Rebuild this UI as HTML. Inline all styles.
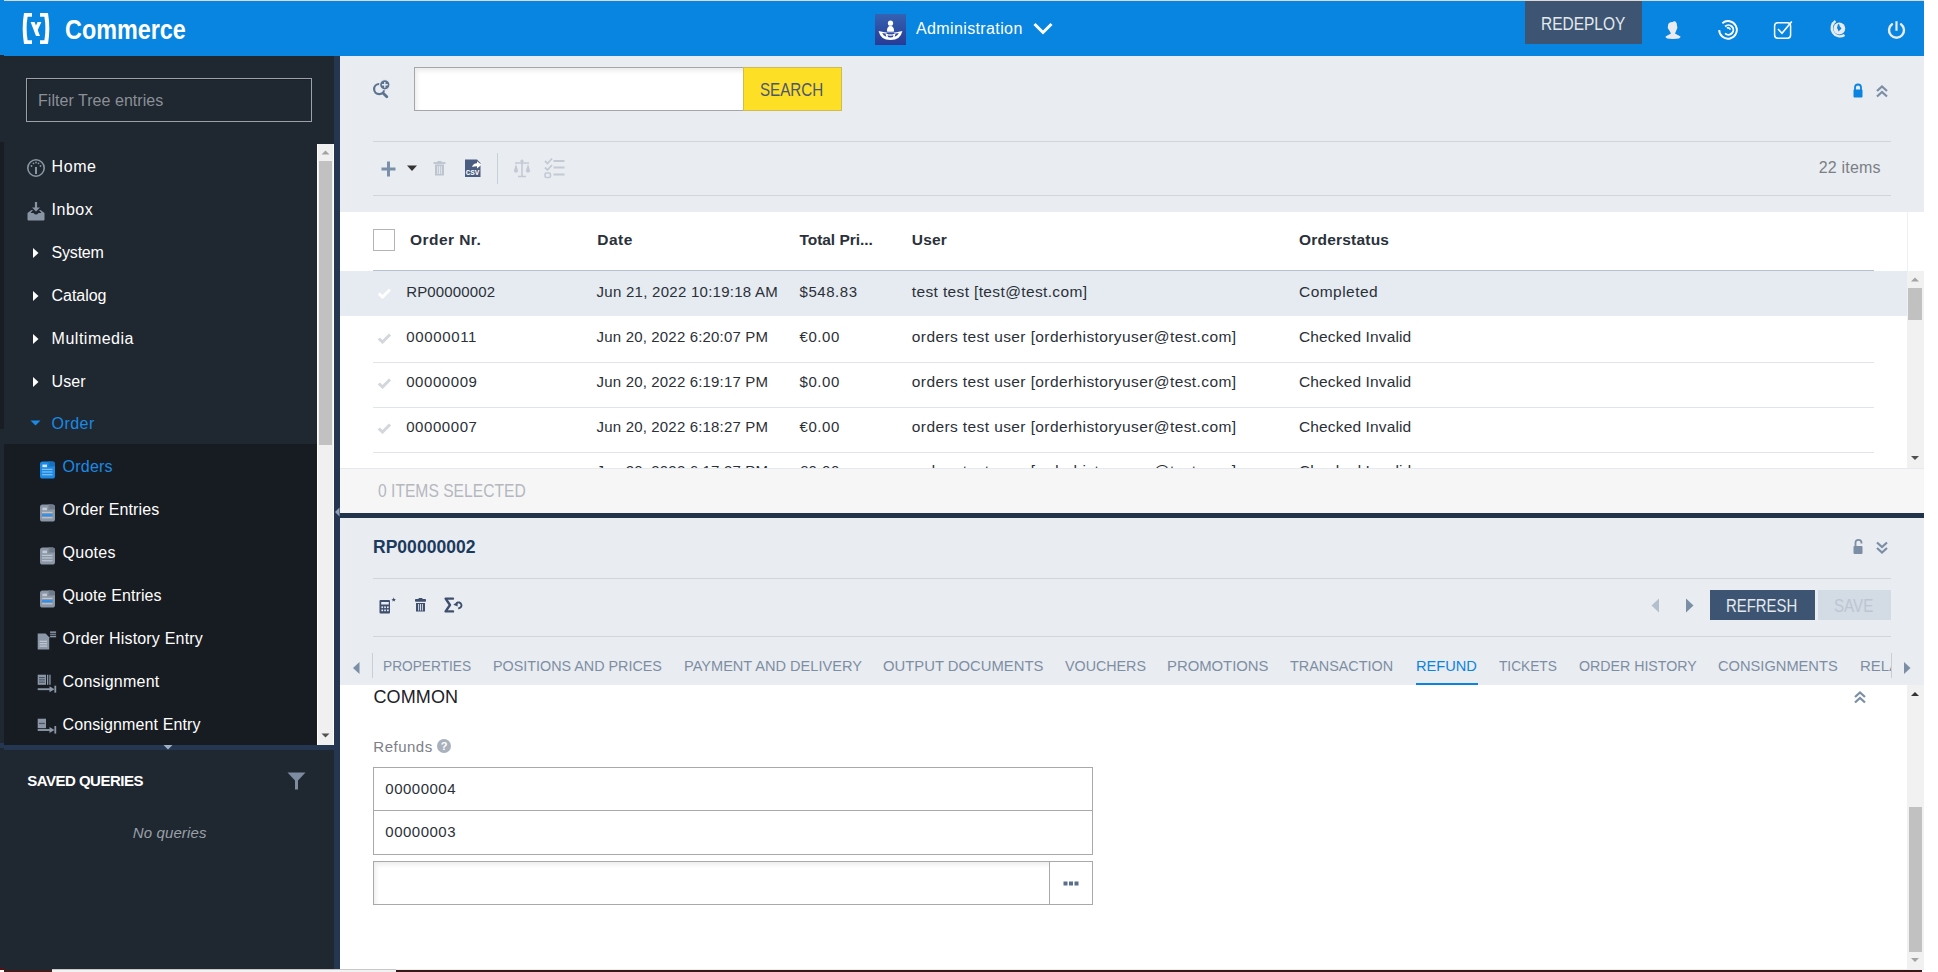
<!DOCTYPE html>
<html><head><meta charset="utf-8"><title>Backoffice</title>
<style>
html,body{margin:0;padding:0;}
body{width:1938px;height:972px;overflow:hidden;position:relative;background:#ffffff;font-family:"Liberation Sans", sans-serif;}
svg{display:block;}
</style></head><body>
<div style="position:absolute;left:0px;top:0px;width:1938px;height:972px;background:#ffffff;"></div>
<div style="position:absolute;left:4px;top:0px;width:1920px;height:1px;background:#dcd9d6;"></div>
<div style="position:absolute;left:0px;top:0px;width:4px;height:55px;background:#0785e0;"></div>
<div style="position:absolute;left:4px;top:1px;width:1920px;height:55px;background:#0785e0;"></div>
<div style="position:absolute;left:0px;top:56px;width:334px;height:914px;background:#1f2730;"></div>
<div style="position:absolute;left:0px;top:55px;width:4px;height:1px;background:#1f2730;"></div>
<div style="position:absolute;left:0px;top:142px;width:4px;height:287px;background:#181d24;"></div>
<div style="position:absolute;left:334px;top:56px;width:6px;height:914px;background:#243650;"></div>
<div style="position:absolute;left:340px;top:56px;width:1584px;height:914px;background:#e9ecf1;"></div>
<div style="position:absolute;left:4px;top:970px;width:48px;height:2px;background:#421a1a;"></div>
<div style="position:absolute;left:0px;top:968px;width:4px;height:2px;background:#5a1010;"></div>
<div style="position:absolute;left:52px;top:969px;width:344px;height:3px;background:#f2f2f2;"></div>
<div style="position:absolute;left:52px;top:969px;width:344px;height:1px;background:#c8c8c8;"></div>
<div style="position:absolute;left:396px;top:970px;width:1526px;height:2px;background:#3a1616;"></div>
<svg style="position:absolute;left:20px;top:11px;" width="34" height="36" viewBox="0 0 34 36">
<path d="M12 2 H4 Q1.4 17.5 4 33 H12 V29.2 H7.6 Q5.6 17.5 7.6 5.8 H12 Z" fill="#fff"/>
<path d="M20 2 H28 Q30.6 17.5 28 33 H20 V29.2 H24.4 Q26.4 17.5 24.4 5.8 H20 Z" fill="#fff"/>
<path d="M10.6 11 L14.6 11 L20 25 L16 25 Z" fill="#fff"/>
<path d="M17.6 11 L21.4 11 L17.4 19.8 L15.5 15.6 Z" fill="#fff"/>
</svg>
<div id="t0" style="position:absolute;left:65px;top:15.72px;font-size:27.5px;line-height:27.5px;color:#ffffff;font-weight:700;white-space:nowrap;transform:scaleX(0.8503);transform-origin:0 0;">Commerce</div>
<svg style="position:absolute;left:875px;top:14px;" width="31" height="31" viewBox="0 0 31 31">
<defs><linearGradient id="ag" x1="0" y1="0" x2="0" y2="1"><stop offset="0" stop-color="#3562b2"/><stop offset="1" stop-color="#283a95"/></linearGradient></defs>
<rect x="0" y="0" width="31" height="31" fill="url(#ag)"/>
<path d="M3.6 16.9 Q15.5 20.4 27.4 16.9 Q25.5 26 15.5 26 Q5.5 26 3.6 16.9 Z" fill="#fff"/>
<path d="M7.2 19 Q15.5 21.3 23.8 19 Q21.8 23.4 15.5 23.4 Q9.2 23.4 7.2 19 Z" fill="#2d479f"/>
<path d="M11.3 19.8 L12.4 23.6 M19.7 19.8 L18.6 23.6" stroke="#fff" stroke-width="1.6"/>
<path d="M11.5 20.4 Q15.5 21.6 19.5 20.4" fill="none" stroke="#fff" stroke-width="1.3"/>
<circle cx="15.5" cy="9.2" r="2.6" fill="#fff"/>
<path d="M11.6 19.2 Q15.5 20.2 19.4 19.2" fill="none" stroke="#2f4aa5" stroke-width="1.3"/>
<path d="M11.9 17.4 Q11.9 11.9 15.5 11.9 Q19.1 11.9 19.1 17.4 Q15.5 18.3 11.9 17.4 Z" fill="#fff"/>
</svg>
<div id="t1" style="position:absolute;left:916px;top:21.46px;font-size:16px;line-height:16px;color:#ffffff;font-weight:400;white-space:nowrap;letter-spacing:0.377px;">Administration</div>
<svg style="position:absolute;left:1032px;top:21px;" width="22" height="15" viewBox="0 0 22 15"><path d="M2.5 3 L11 11.5 L19.5 3" fill="none" stroke="#fff" stroke-width="3"/></svg>
<div style="position:absolute;left:1525px;top:1px;width:117px;height:43px;background:#3d5573;"></div>
<div id="t2" style="position:absolute;left:1541.1px;top:16.19px;font-size:17.5px;line-height:17.5px;color:#e4e9ee;font-weight:400;white-space:nowrap;transform:scaleX(0.8838);transform-origin:0 0;">REDEPLOY</div>
<svg style="position:absolute;left:1663px;top:20px;" width="20" height="20" viewBox="0 0 20 20">
<path d="M5 5.5 Q5 2 9.5 2 Q11 1 12.5 1.5 Q14 3 14 5.5 Q15 8 13.5 10 Q12.5 12.5 12 13.5 L17.5 16.5 Q18 19 10 19 Q2 19 2.5 16.5 L8 13.5 Q7.5 12.5 6 10 Q4 8 5 5.5 Z" fill="#e9ebef"/>
</svg>
<svg style="position:absolute;left:1717px;top:19px;" width="22" height="22" viewBox="0 0 22 22">
<path d="M2.2 10.9 A8.8 8.8 0 1 0 5.34 4.16" fill="none" stroke="#fff" stroke-width="1.9"/>
<path d="M8.1 7.5 A4.8 4.8 0 1 1 8.1 14.3" fill="none" stroke="#fff" stroke-width="1.9"/>
<path d="M9.9 9.1 A2.2 2.2 0 0 1 13.2 10.6" fill="none" stroke="#fff" stroke-width="1.8"/>
</svg>
<svg style="position:absolute;left:1772px;top:19px;" width="22" height="22" viewBox="0 0 22 22">
<rect x="2.6" y="3.8" width="16" height="15.5" rx="3.2" fill="none" stroke="#fff" stroke-width="1.5"/>
<path d="M6 10 L10 14.3 L19.8 2.5" fill="none" stroke="#fff" stroke-width="1.6"/>
</svg>
<svg style="position:absolute;left:1827px;top:18px;" width="22" height="22" viewBox="0 0 22 22">
<path d="M8.5 3 A8 8 0 0 0 17.5 17" fill="none" stroke="#e9ebef" stroke-width="2.4"/>
<circle cx="12.3" cy="10.5" r="5.9" fill="#e9ebef"/>
<path d="M11 6 Q13 6 12.5 8 L14.5 10.5 L11.5 13.5 Q11 11 10 10 Z" fill="#0785e0"/>
</svg>
<svg style="position:absolute;left:1886px;top:19px;" width="22" height="22" viewBox="0 0 22 22">
<path d="M6 5.2 A7.5 7.5 0 1 0 15 5.2" fill="none" stroke="#e9ebef" stroke-width="2.4" stroke-linecap="round"/>
<path d="M10.5 2.2 V11.8" fill="none" stroke="#e9ebef" stroke-width="2.2"/>
</svg>
<div style="position:absolute;left:26px;top:78px;width:286px;height:44px;background:transparent;box-sizing:border-box;border:1px solid #9ca1a7;background:#1f2730;box-shadow:inset 1px 1px 1px rgba(0,0,0,0.25);"></div>
<div id="t3" style="position:absolute;left:38px;top:93.46px;font-size:16px;line-height:16px;color:#8b9097;font-weight:400;white-space:nowrap;letter-spacing:0.044px;">Filter Tree entries</div>
<div style="position:absolute;left:317px;top:144px;width:17px;height:601px;background:#f0f0f0;box-sizing:border-box;border-left:1px solid #ffffff;border-right:1px solid #ffffff;"></div>
<div style="position:absolute;left:319px;top:161px;width:13px;height:284px;background:#c1c1c1;"></div>
<svg style="position:absolute;left:319px;top:148px;" width="13" height="8" viewBox="0 0 13 8"><path d="M2.5 6.5 L6.5 2.5 L10.5 6.5 Z" fill="#a3a3a3"/></svg>
<svg style="position:absolute;left:319px;top:732px;" width="13" height="8" viewBox="0 0 13 8"><path d="M2.5 1.5 L6.5 5.5 L10.5 1.5 Z" fill="#505050"/></svg>
<div style="position:absolute;left:4px;top:444px;width:313px;height:301px;background:#171c22;"></div>
<div style="position:absolute;left:4px;top:745px;width:330px;height:5px;background:#243650;"></div>
<div style="position:absolute;left:0px;top:743px;width:4px;height:5px;background:#243650;"></div>
<svg style="position:absolute;left:163px;top:745px;" width="10" height="5" viewBox="0 0 10 5"><path d="M0.5 0 L9.5 0 L5 4.5 Z" fill="#9fb0c6"/></svg>
<div id="t4" style="position:absolute;left:51.6px;top:158.96px;font-size:16px;line-height:16px;color:#ffffff;font-weight:400;white-space:nowrap;letter-spacing:0.564px;">Home</div>
<svg style="position:absolute;left:26px;top:158.0px;" width="20" height="20" viewBox="0 0 20 20"><circle cx="10" cy="10" r="8.2" fill="none" stroke="#8a95a3" stroke-width="1.6"/>
<path d="M10 9 L10 16" stroke="#8a95a3" stroke-width="2"/>
<circle cx="5.5" cy="8" r="0.9" fill="#8a95a3"/><circle cx="7.5" cy="5.3" r="0.9" fill="#8a95a3"/><circle cx="10" cy="4.5" r="0.9" fill="#8a95a3"/><circle cx="12.5" cy="5.3" r="0.9" fill="#8a95a3"/><circle cx="14.5" cy="8" r="0.9" fill="#8a95a3"/></svg>
<div id="t5" style="position:absolute;left:51.6px;top:201.96px;font-size:16px;line-height:16px;color:#ffffff;font-weight:400;white-space:nowrap;letter-spacing:0.485px;">Inbox</div>
<svg style="position:absolute;left:26px;top:201.0px;" width="20" height="21" viewBox="0 0 20 21"><path d="M10 1 V9" stroke="#8a95a3" stroke-width="2.2"/><path d="M6 6.5 L10 10.5 L14 6.5 Z" fill="#8a95a3"/>
<path d="M1.5 12 L5.5 9 L7 9 L4.5 12 H7.5 Q10 15 12.5 12 H15.5 L13 9 L14.5 9 L18.5 12 V18.5 Q18.5 19.5 17.5 19.5 H2.5 Q1.5 19.5 1.5 18.5 Z" fill="#8a95a3"/></svg>
<div id="t6" style="position:absolute;left:51.6px;top:244.96px;font-size:16px;line-height:16px;color:#ffffff;font-weight:400;white-space:nowrap;letter-spacing:-0.213px;">System</div>
<svg style="position:absolute;left:30px;top:245.5px;" width="12" height="14" viewBox="0 0 12 14"><path d="M3 2 L8.5 7 L3 12 Z" fill="#ffffff"/></svg>
<div id="t7" style="position:absolute;left:51.6px;top:287.96px;font-size:16px;line-height:16px;color:#ffffff;font-weight:400;white-space:nowrap;letter-spacing:-0.063px;">Catalog</div>
<svg style="position:absolute;left:30px;top:288.5px;" width="12" height="14" viewBox="0 0 12 14"><path d="M3 2 L8.5 7 L3 12 Z" fill="#ffffff"/></svg>
<div id="t8" style="position:absolute;left:51.6px;top:330.96px;font-size:16px;line-height:16px;color:#ffffff;font-weight:400;white-space:nowrap;letter-spacing:0.502px;">Multimedia</div>
<svg style="position:absolute;left:30px;top:331.5px;" width="12" height="14" viewBox="0 0 12 14"><path d="M3 2 L8.5 7 L3 12 Z" fill="#ffffff"/></svg>
<div id="t9" style="position:absolute;left:51.6px;top:373.96px;font-size:16px;line-height:16px;color:#ffffff;font-weight:400;white-space:nowrap;letter-spacing:0.100px;">User</div>
<svg style="position:absolute;left:30px;top:374.5px;" width="12" height="14" viewBox="0 0 12 14"><path d="M3 2 L8.5 7 L3 12 Z" fill="#ffffff"/></svg>
<div id="t10" style="position:absolute;left:51.6px;top:415.66px;font-size:16px;line-height:16px;color:#1a8ae6;font-weight:400;white-space:nowrap;letter-spacing:0.443px;">Order</div>
<svg style="position:absolute;left:29px;top:418px;" width="14" height="10" viewBox="0 0 14 10"><path d="M1.5 2.5 L11.5 2.5 L6.5 7.5 Z" fill="#1a8ae6"/></svg>
<div id="t11" style="position:absolute;left:62.5px;top:458.76px;font-size:16px;line-height:16px;color:#1a8ae6;font-weight:400;white-space:nowrap;letter-spacing:0.235px;">Orders</div>
<svg style="position:absolute;left:39px;top:460.8px;" width="17" height="18" viewBox="0 0 17 18"><rect x="1" y="0.5" width="15" height="17" rx="2.6" fill="#1a8ae6"/>
<path d="M9.5 0.5 H13.4 Q16 0.5 16 3.1 V6 H9.5 Z" fill="#1670bd"/><path d="M10 0.5 V5.5 H16" fill="none" stroke="#1a8ae6" stroke-width="0.9" opacity="0.6"/>
<rect x="3.4" y="3.6" width="4.6" height="2.6" fill="#d6e8f7"/><rect x="3" y="7.8" width="10.5" height="1.1" fill="#8fc5ef"/><rect x="3" y="10.4" width="10.5" height="1.1" fill="#8fc5ef"/><rect x="3" y="13.2" width="10.5" height="1.1" fill="#8fc5ef"/></svg>
<div id="t12" style="position:absolute;left:62.5px;top:501.76px;font-size:16px;line-height:16px;color:#ffffff;font-weight:400;white-space:nowrap;letter-spacing:0.137px;">Order Entries</div>
<svg style="position:absolute;left:39px;top:503.79999999999995px;" width="17" height="18" viewBox="0 0 17 18"><rect x="1" y="0.5" width="15" height="17" rx="2.6" fill="#8b96a6"/>
<path d="M9.5 0.5 H13.4 Q16 0.5 16 3.1 V6 H9.5 Z" fill="#6f7a8a"/><path d="M10 0.5 V5.5 H16" fill="none" stroke="#8b96a6" stroke-width="0.9" opacity="0.6"/>
<rect x="3.4" y="3.6" width="4.6" height="2.6" fill="#c3cad4"/><rect x="3" y="7.8" width="10.5" height="1.1" fill="#c3cad4"/><rect x="3" y="10.2" width="10.5" height="2" fill="#2d8ff0"/><rect x="3" y="13.2" width="10.5" height="1.1" fill="#c3cad4"/></svg>
<div id="t13" style="position:absolute;left:62.5px;top:544.76px;font-size:16px;line-height:16px;color:#ffffff;font-weight:400;white-space:nowrap;letter-spacing:0.277px;">Quotes</div>
<svg style="position:absolute;left:39px;top:546.8px;" width="17" height="18" viewBox="0 0 17 18"><rect x="1" y="0.5" width="15" height="17" rx="2.6" fill="#8b96a6"/>
<path d="M9.5 0.5 H13.4 Q16 0.5 16 3.1 V6 H9.5 Z" fill="#6f7a8a"/><path d="M10 0.5 V5.5 H16" fill="none" stroke="#8b96a6" stroke-width="0.9" opacity="0.6"/>
<rect x="3.4" y="3.6" width="4.6" height="2.6" fill="#c3cad4"/><rect x="3" y="7.8" width="10.5" height="1.1" fill="#c3cad4"/><rect x="3" y="10.4" width="10.5" height="1.1" fill="#c3cad4"/><rect x="3" y="13.2" width="10.5" height="1.1" fill="#c3cad4"/></svg>
<div id="t14" style="position:absolute;left:62.5px;top:587.76px;font-size:16px;line-height:16px;color:#ffffff;font-weight:400;white-space:nowrap;letter-spacing:0.104px;">Quote Entries</div>
<svg style="position:absolute;left:39px;top:589.8px;" width="17" height="18" viewBox="0 0 17 18"><rect x="1" y="0.5" width="15" height="17" rx="2.6" fill="#8b96a6"/>
<path d="M9.5 0.5 H13.4 Q16 0.5 16 3.1 V6 H9.5 Z" fill="#6f7a8a"/><path d="M10 0.5 V5.5 H16" fill="none" stroke="#8b96a6" stroke-width="0.9" opacity="0.6"/>
<rect x="3.4" y="3.6" width="4.6" height="2.6" fill="#c3cad4"/><rect x="3" y="7.8" width="10.5" height="1.1" fill="#c3cad4"/><rect x="3" y="10.2" width="10.5" height="2" fill="#2d8ff0"/><rect x="3" y="13.2" width="10.5" height="1.1" fill="#c3cad4"/></svg>
<div id="t15" style="position:absolute;left:62.5px;top:630.76px;font-size:16px;line-height:16px;color:#ffffff;font-weight:400;white-space:nowrap;letter-spacing:0.187px;">Order History Entry</div>
<svg style="position:absolute;left:37px;top:631.3px;" width="20" height="20" viewBox="0 0 20 20"><path d="M0.7 2.6 H8.6 L12.2 6.2 V18.6 H0.7 Z" fill="#8b96a6"/><rect x="2.6" y="9.7" width="7.4" height="1.2" fill="#c3cad4"/><rect x="2.6" y="12.1" width="7.4" height="1.2" fill="#c3cad4"/><rect x="2.6" y="14.5" width="7.4" height="1.2" fill="#c3cad4"/>
<rect x="13.1" y="0.4" width="6" height="1.5" fill="#8b96a6"/><rect x="13.1" y="2.6" width="6" height="1.5" fill="#6f7a8a"/><rect x="13.1" y="4.8" width="6" height="1.5" fill="#8b96a6"/></svg>
<div id="t16" style="position:absolute;left:62.5px;top:673.76px;font-size:16px;line-height:16px;color:#ffffff;font-weight:400;white-space:nowrap;letter-spacing:0.250px;">Consignment</div>
<svg style="position:absolute;left:37px;top:674.3px;" width="20" height="20" viewBox="0 0 20 20"><rect x="0.7" y="0.7" width="8.3" height="10.1" fill="#8b96a6"/><rect x="2" y="3" width="5.8" height="1.1" fill="#4a5363"/><rect x="2" y="5.3" width="5.8" height="1.1" fill="#4a5363"/><rect x="2" y="7.6" width="5.8" height="1.1" fill="#4a5363"/>
<rect x="10" y="0.7" width="1.3" height="10.1" fill="#8b96a6"/><rect x="12.3" y="0.7" width="1.3" height="10.1" fill="#8b96a6"/><path d="M0.7 15.2 H14" stroke="#8b96a6" stroke-width="1.9"/><path d="M12.5 12.2 L17.5 15.2 L12.5 18.2 Z" fill="#8b96a6"/><rect x="17.4" y="11.7" width="1.8" height="7" fill="#8b96a6"/></svg>
<div id="t17" style="position:absolute;left:62.5px;top:716.76px;font-size:16px;line-height:16px;color:#ffffff;font-weight:400;white-space:nowrap;letter-spacing:0.120px;">Consignment Entry</div>
<svg style="position:absolute;left:37px;top:717.3px;" width="20" height="20" viewBox="0 0 20 20"><rect x="0.7" y="1.7" width="8.3" height="9.5" fill="#8b96a6"/><rect x="2" y="5.8" width="5.8" height="1.3" fill="#4a5363"/>
<path d="M0.7 13 H14" stroke="#8b96a6" stroke-width="1.9"/><path d="M12.5 10 L17.5 13 L12.5 16 Z" fill="#8b96a6"/><rect x="17.4" y="9" width="1.8" height="7.6" fill="#8b96a6"/></svg>
<div id="t18" style="position:absolute;left:27.2px;top:773.40px;font-size:15px;line-height:15px;color:#ffffff;font-weight:700;white-space:nowrap;letter-spacing:-0.504px;">SAVED QUERIES</div>
<svg style="position:absolute;left:286px;top:771px;" width="21" height="20" viewBox="0 0 21 20"><path d="M1.5 1.5 H19.5 L12 9.5 V18.5 H9 V9.5 Z" fill="#7d8ca1"/></svg>
<div id="t19" style="position:absolute;left:132.8px;top:824.70px;font-size:15px;line-height:15px;color:#9aa0a8;font-weight:400;white-space:nowrap;font-style:italic;letter-spacing:0.117px;">No queries</div>
<svg style="position:absolute;left:370px;top:77px;" width="22" height="24" viewBox="0 0 22 24"><circle cx="9.2" cy="12.1" r="5.1" fill="none" stroke="#5b7391" stroke-width="2.2"/>
<path d="M13.2 16.2 L16.8 19.8" stroke="#5b7391" stroke-width="2.8" stroke-linecap="round"/>
<circle cx="14.8" cy="7.8" r="5.2" fill="#5b7391" stroke="#e9ecf1" stroke-width="1.1"/><path d="M14.8 4.9 V10.7 M11.9 7.8 H17.7" stroke="#e9ecf1" stroke-width="1.4"/></svg>
<div style="position:absolute;left:414px;top:67px;width:330px;height:44px;background:#ffffff;box-sizing:border-box;border:1px solid #a6a6a6;box-shadow:inset 2px 3px 4px rgba(0,0,0,0.08);"></div>
<div style="position:absolute;left:743px;top:67px;width:99px;height:44px;background:#fddf26;box-sizing:border-box;border:1px solid #cdbb55;"></div>
<div id="t20" style="position:absolute;left:760.4px;top:82.09px;font-size:17.5px;line-height:17.5px;color:#4b5670;font-weight:400;white-space:nowrap;transform:scaleX(0.8667);transform-origin:0 0;">SEARCH</div>
<svg style="position:absolute;left:1851px;top:82.5px;" width="14" height="16" viewBox="0 0 14 16"><path d="M4 7 V4.5 Q4 1.5 7 1.5 Q10 1.5 10 4.5 V7" fill="none" stroke="#0a84e0" stroke-width="1.8"/><rect x="2.5" y="6.5" width="9" height="8" rx="1" fill="#0a84e0"/></svg>
<svg style="position:absolute;left:1875px;top:82.5px;" width="14" height="16" viewBox="0 0 14 16"><path d="M2 8 L7 3.5 L12 8 M2 13.5 L7 9 L12 13.5" fill="none" stroke="#7b8ea6" stroke-width="2.2"/></svg>
<div style="position:absolute;left:373px;top:141px;width:1518px;height:1px;background:#d1d6dd;"></div>
<div style="position:absolute;left:373px;top:195px;width:1518px;height:1px;background:#d1d6dd;"></div>
<svg style="position:absolute;left:380px;top:160px;" width="17" height="18" viewBox="0 0 17 18"><path d="M8.5 1.5 V16.5 M1.5 9 H15.5" stroke="#7a8fa8" stroke-width="3"/></svg>
<svg style="position:absolute;left:405px;top:164px;" width="14" height="9" viewBox="0 0 14 9"><path d="M2 1.5 H12 L7 7 Z" fill="#333"/></svg>
<svg style="position:absolute;left:432px;top:160px;" width="15" height="17" viewBox="0 0 15 17"><path d="M1.5 3 H13.5" stroke="#bcc4cf" stroke-width="1.8"/><rect x="5.5" y="1" width="4" height="2" fill="#bcc4cf"/><path d="M3 4.5 H12 V15.5 H3 Z" fill="#bcc4cf"/><path d="M5.7 6 V14 M7.5 6 V14 M9.3 6 V14" stroke="#e9ecf1" stroke-width="0.9"/></svg>
<svg style="position:absolute;left:464px;top:158px;" width="20" height="20" viewBox="0 0 20 20"><path d="M1 1.5 H13 L16.5 5 V19 H1 Z" fill="#4a5c80"/>
<path d="M8 9 Q9 5.5 13 5.2 V3.2 L17.5 6.8 L13 10.4 V8.3 Q10 8.3 8 9 Z" fill="#fff"/>
<text x="1.8" y="17.3" font-family="Liberation Mono" font-size="7.5" font-weight="700" fill="#fff">CSV</text></svg>
<div style="position:absolute;left:497px;top:153px;width:1px;height:31px;background:#c9cfd7;"></div>
<svg style="position:absolute;left:512px;top:158px;" width="20" height="20" viewBox="0 0 20 20"><path d="M10 2 V18 M6 18.5 H14 M3 5 H17" stroke="#c3cad4" stroke-width="1.6"/><circle cx="10" cy="3" r="1.6" fill="#c3cad4"/>
<path d="M4 6 L1.8 13 H6.2 Z M16 6 L13.8 13 H18.2 Z" fill="#c3cad4"/><path d="M1.6 13 Q4 16.5 6.4 13 Z M13.6 13 Q16 16.5 18.4 13 Z" fill="#c3cad4"/></svg>
<svg style="position:absolute;left:543px;top:157px;" width="23" height="22" viewBox="0 0 23 22"><path d="M2 4 L4.5 6.5 L9 1.5 M2 10.5 L4.5 13 L9 8" fill="none" stroke="#c3cad4" stroke-width="1.8"/>
<rect x="2" y="16" width="5.5" height="4.5" rx="1.5" fill="none" stroke="#c3cad4" stroke-width="1.6"/>
<path d="M10.5 4 H21.5 M10.5 10.5 H21.5 M10.5 17.5 H21.5" stroke="#c3cad4" stroke-width="1.8"/></svg>
<div id="t21" style="position:absolute;left:1818.7px;top:160.46px;font-size:16px;line-height:16px;color:#7b7f85;font-weight:400;white-space:nowrap;letter-spacing:0.202px;">22 items</div>
<div style="position:absolute;left:340px;top:212px;width:1584px;height:256px;background:#ffffff;"></div>
<div style="position:absolute;left:1907px;top:212px;width:1px;height:59px;background:#eef0f3;"></div>
<div style="position:absolute;left:373px;top:229px;width:22px;height:22px;background:#ffffff;box-sizing:border-box;border:1px solid #b3b3b3;"></div>
<div id="t22" style="position:absolute;left:410px;top:231.68px;font-size:15.5px;line-height:15.5px;color:#2a313b;font-weight:700;white-space:nowrap;letter-spacing:0.442px;">Order Nr.</div>
<div id="t23" style="position:absolute;left:597.2px;top:231.68px;font-size:15.5px;line-height:15.5px;color:#2a313b;font-weight:700;white-space:nowrap;letter-spacing:0.544px;">Date</div>
<div id="t24" style="position:absolute;left:799.5px;top:231.68px;font-size:15.5px;line-height:15.5px;color:#2a313b;font-weight:700;white-space:nowrap;letter-spacing:-0.049px;">Total Pri...</div>
<div id="t25" style="position:absolute;left:911.8px;top:231.68px;font-size:15.5px;line-height:15.5px;color:#2a313b;font-weight:700;white-space:nowrap;letter-spacing:0.190px;">User</div>
<div id="t26" style="position:absolute;left:1299px;top:231.68px;font-size:15.5px;line-height:15.5px;color:#2a313b;font-weight:700;white-space:nowrap;letter-spacing:0.206px;">Orderstatus</div>
<div style="position:absolute;left:373px;top:270px;width:1501px;height:1px;background:#b7c2cf;"></div>
<div style="position:absolute;left:340px;top:271px;width:1567px;height:45px;background:#e5ebf1;"></div>
<div style="position:absolute;left:373px;top:362px;width:1501px;height:1px;background:#dfe5ec;"></div>
<div style="position:absolute;left:373px;top:407px;width:1501px;height:1px;background:#dfe5ec;"></div>
<div style="position:absolute;left:373px;top:452px;width:1501px;height:1px;background:#dfe5ec;"></div>
<div style="position:absolute;left:340px;top:271px;width:1567px;height:197px;overflow:hidden;">
<svg style="position:absolute;left:36.5px;top:15.899999999999977px;" width="15" height="12" viewBox="0 0 15 12"><path d="M1.8 6.5 L5.5 10 L13 2.5" fill="none" stroke="#ffffff" stroke-width="3"/></svg>
<div id="t27" style="position:absolute;left:66.19999999999999px;top:13.20px;font-size:15px;line-height:15px;color:#2b3038;font-weight:400;white-space:nowrap;letter-spacing:0.136px;">RP00000002</div>
<div id="t28" style="position:absolute;left:256.6px;top:13.20px;font-size:15px;line-height:15px;color:#2b3038;font-weight:400;white-space:nowrap;letter-spacing:0.263px;">Jun 21, 2022 10:19:18 AM</div>
<div id="t29" style="position:absolute;left:459.5px;top:13.20px;font-size:15px;line-height:15px;color:#2b3038;font-weight:400;white-space:nowrap;letter-spacing:0.544px;">$548.83</div>
<div id="t30" style="position:absolute;left:571.8px;top:12.78px;font-size:15.5px;line-height:15.5px;color:#2b3038;font-weight:400;white-space:nowrap;letter-spacing:0.365px;">test test [test@test.com]</div>
<div id="t31" style="position:absolute;left:959px;top:12.78px;font-size:15.5px;line-height:15.5px;color:#2b3038;font-weight:400;white-space:nowrap;letter-spacing:0.459px;">Completed</div>
<svg style="position:absolute;left:36.5px;top:60.89999999999998px;" width="15" height="12" viewBox="0 0 15 12"><path d="M1.8 6.5 L5.5 10 L13 2.5" fill="none" stroke="#d3d6da" stroke-width="3"/></svg>
<div id="t32" style="position:absolute;left:66.19999999999999px;top:58.20px;font-size:15px;line-height:15px;color:#2b3038;font-weight:400;white-space:nowrap;letter-spacing:0.654px;">00000011</div>
<div id="t33" style="position:absolute;left:256.6px;top:58.20px;font-size:15px;line-height:15px;color:#2b3038;font-weight:400;white-space:nowrap;letter-spacing:0.172px;">Jun 20, 2022 6:20:07 PM</div>
<div id="t34" style="position:absolute;left:459.5px;top:58.20px;font-size:15px;line-height:15px;color:#2b3038;font-weight:400;white-space:nowrap;letter-spacing:0.588px;">€0.00</div>
<div id="t35" style="position:absolute;left:571.8px;top:57.78px;font-size:15.5px;line-height:15.5px;color:#2b3038;font-weight:400;white-space:nowrap;letter-spacing:0.403px;">orders test user [orderhistoryuser@test.com]</div>
<div id="t36" style="position:absolute;left:959px;top:57.78px;font-size:15.5px;line-height:15.5px;color:#2b3038;font-weight:400;white-space:nowrap;letter-spacing:0.139px;">Checked Invalid</div>
<svg style="position:absolute;left:36.5px;top:105.89999999999998px;" width="15" height="12" viewBox="0 0 15 12"><path d="M1.8 6.5 L5.5 10 L13 2.5" fill="none" stroke="#d3d6da" stroke-width="3"/></svg>
<div id="t37" style="position:absolute;left:66.19999999999999px;top:103.20px;font-size:15px;line-height:15px;color:#2b3038;font-weight:400;white-space:nowrap;letter-spacing:0.564px;">00000009</div>
<div id="t38" style="position:absolute;left:256.6px;top:103.20px;font-size:15px;line-height:15px;color:#2b3038;font-weight:400;white-space:nowrap;letter-spacing:0.172px;">Jun 20, 2022 6:19:17 PM</div>
<div id="t39" style="position:absolute;left:459.5px;top:103.20px;font-size:15px;line-height:15px;color:#2b3038;font-weight:400;white-space:nowrap;letter-spacing:0.588px;">$0.00</div>
<div id="t40" style="position:absolute;left:571.8px;top:102.78px;font-size:15.5px;line-height:15.5px;color:#2b3038;font-weight:400;white-space:nowrap;letter-spacing:0.403px;">orders test user [orderhistoryuser@test.com]</div>
<div id="t41" style="position:absolute;left:959px;top:102.78px;font-size:15.5px;line-height:15.5px;color:#2b3038;font-weight:400;white-space:nowrap;letter-spacing:0.139px;">Checked Invalid</div>
<svg style="position:absolute;left:36.5px;top:150.89999999999998px;" width="15" height="12" viewBox="0 0 15 12"><path d="M1.8 6.5 L5.5 10 L13 2.5" fill="none" stroke="#d3d6da" stroke-width="3"/></svg>
<div id="t42" style="position:absolute;left:66.19999999999999px;top:148.20px;font-size:15px;line-height:15px;color:#2b3038;font-weight:400;white-space:nowrap;letter-spacing:0.564px;">00000007</div>
<div id="t43" style="position:absolute;left:256.6px;top:148.20px;font-size:15px;line-height:15px;color:#2b3038;font-weight:400;white-space:nowrap;letter-spacing:0.172px;">Jun 20, 2022 6:18:27 PM</div>
<div id="t44" style="position:absolute;left:459.5px;top:148.20px;font-size:15px;line-height:15px;color:#2b3038;font-weight:400;white-space:nowrap;letter-spacing:0.588px;">€0.00</div>
<div id="t45" style="position:absolute;left:571.8px;top:147.78px;font-size:15.5px;line-height:15.5px;color:#2b3038;font-weight:400;white-space:nowrap;letter-spacing:0.403px;">orders test user [orderhistoryuser@test.com]</div>
<div id="t46" style="position:absolute;left:959px;top:147.78px;font-size:15.5px;line-height:15.5px;color:#2b3038;font-weight:400;white-space:nowrap;letter-spacing:0.139px;">Checked Invalid</div>
<div id="t47" style="position:absolute;left:256.6px;top:192.20px;font-size:15px;line-height:15px;color:#2b3038;font-weight:400;white-space:nowrap;letter-spacing:0.172px;">Jun 20, 2022 6:17:37 PM</div>
<div id="t48" style="position:absolute;left:459.5px;top:192.20px;font-size:15px;line-height:15px;color:#2b3038;font-weight:400;white-space:nowrap;letter-spacing:0.588px;">€0.00</div>
<div id="t49" style="position:absolute;left:571.8px;top:191.78px;font-size:15.5px;line-height:15.5px;color:#2b3038;font-weight:400;white-space:nowrap;letter-spacing:0.403px;">orders test user [orderhistoryuser@test.com]</div>
<div id="t50" style="position:absolute;left:959px;top:191.78px;font-size:15.5px;line-height:15.5px;color:#2b3038;font-weight:400;white-space:nowrap;letter-spacing:0.139px;">Checked Invalid</div>
</div>
<div style="position:absolute;left:1907px;top:271px;width:17px;height:197px;background:#f1f1f1;"></div>
<div style="position:absolute;left:1908px;top:288px;width:14px;height:32px;background:#c1c1c1;"></div>
<svg style="position:absolute;left:1908px;top:275px;" width="14" height="9" viewBox="0 0 14 9"><path d="M3 6.5 L7 2.5 L11 6.5 Z" fill="#a3a3a3"/></svg>
<svg style="position:absolute;left:1908px;top:454px;" width="14" height="9" viewBox="0 0 14 9"><path d="M3 2 L7 6 L11 2 Z" fill="#505050"/></svg>
<div style="position:absolute;left:340px;top:468px;width:1584px;height:45px;background:#f6f6f6;"></div>
<div style="position:absolute;left:340px;top:468px;width:1584px;height:1px;background:#e6e9ee;"></div>
<div id="t51" style="position:absolute;left:378px;top:482.59px;font-size:17.5px;line-height:17.5px;color:#b4b8be;font-weight:400;white-space:nowrap;transform:scaleX(0.8937);transform-origin:0 0;">0 ITEMS SELECTED</div>
<div style="position:absolute;left:340px;top:513px;width:1584px;height:5px;background:#22344c;"></div>
<svg style="position:absolute;left:334px;top:506px;" width="6" height="12" viewBox="0 0 6 12"><path d="M5.5 1.5 L1 6 L5.5 10.5 Z" fill="#8fa0b6"/></svg>
<div id="t52" style="position:absolute;left:373px;top:539.19px;font-size:17.5px;line-height:17.5px;color:#1b3a5e;font-weight:700;white-space:nowrap;letter-spacing:0.025px;">RP00000002</div>
<svg style="position:absolute;left:1851px;top:538px;" width="14" height="18" viewBox="0 0 14 18"><path d="M4.5 8 V4.8 Q4.5 1.8 7.5 1.8 Q10.5 1.8 10.5 4.8 V5.5" fill="none" stroke="#7b8ea6" stroke-width="1.8"/><rect x="2.5" y="8" width="9" height="8" rx="1" fill="#7b8ea6"/></svg>
<svg style="position:absolute;left:1875px;top:540px;" width="14" height="16" viewBox="0 0 14 16"><path d="M2 2.5 L7 7 L12 2.5 M2 8 L7 12.5 L12 8" fill="none" stroke="#7b8ea6" stroke-width="2.2"/></svg>
<div style="position:absolute;left:373px;top:578px;width:1518px;height:1px;background:#d1d6dd;"></div>
<div style="position:absolute;left:373px;top:636px;width:1518px;height:1px;background:#d1d6dd;"></div>
<svg style="position:absolute;left:377px;top:595px;" width="20" height="20" viewBox="0 0 20 20"><rect x="2.5" y="5" width="10.5" height="13.4" rx="1" fill="#3f4f6e"/>
<rect x="4.2" y="7" width="7.6" height="2.5" fill="#e9ecf1"/>
<rect x="4.4" y="11.4" width="1.7" height="1.7" fill="#e9ecf1"/><rect x="7.2" y="11.4" width="1.7" height="1.7" fill="#e9ecf1"/><rect x="10" y="11.4" width="1.7" height="1.7" fill="#e9ecf1"/>
<rect x="4.4" y="14.5" width="1.7" height="1.7" fill="#e9ecf1"/><rect x="7.2" y="14.5" width="1.7" height="1.7" fill="#e9ecf1"/><rect x="10" y="14.5" width="1.7" height="1.7" fill="#e9ecf1"/>
<path d="M16.7 2.3 L17.3 3.9 L19 3.9 L17.7 5 L18.1 6.6 L16.7 5.7 L15.3 6.6 L15.7 5 L14.4 3.9 L16.1 3.9 Z" fill="#3f4f6e"/></svg>
<svg style="position:absolute;left:413px;top:597px;" width="15" height="17" viewBox="0 0 15 17"><rect x="2" y="1.9" width="11" height="2.8" rx="0.8" fill="#3f4f6e"/><rect x="5.5" y="1" width="4" height="1.6" rx="0.6" fill="#3f4f6e"/>
<path d="M3 6 H12 V14.2 Q12 14.6 11.6 14.6 H3.4 Q3 14.6 3 14.2 Z" fill="#3f4f6e"/><path d="M5.6 7 V13.6 M7.5 7 V13.6 M9.4 7 V13.6" stroke="#e9ecf1" stroke-width="0.9"/></svg>
<svg style="position:absolute;left:443px;top:595px;" width="22" height="20" viewBox="0 0 22 20"><path d="M10 3.6 H2.6 L7 10 L2.6 16.4 H10" fill="none" stroke="#3f4f6e" stroke-width="2.4" stroke-linejoin="round" stroke-linecap="round"/>
<path d="M13.6 8.2 A2.9 2.9 0 1 1 15.2 13.2" fill="none" stroke="#3f4f6e" stroke-width="1.9"/><path d="M10.3 9.8 L14.6 6.6 L14.6 11.6 Z" fill="#3f4f6e"/></svg>
<svg style="position:absolute;left:1649px;top:597px;" width="12" height="17" viewBox="0 0 12 17"><path d="M10 1.5 L2.5 8.5 L10 15.5 Z" fill="#b3bfcd"/></svg>
<svg style="position:absolute;left:1684px;top:597px;" width="12" height="17" viewBox="0 0 12 17"><path d="M2 1.5 L9.5 8.5 L2 15.5 Z" fill="#7b8ea6"/></svg>
<div style="position:absolute;left:1710px;top:590px;width:105px;height:30px;background:#3d5573;"></div>
<div id="t53" style="position:absolute;left:1726.2px;top:598.39px;font-size:17.5px;line-height:17.5px;color:#e4e9ee;font-weight:400;white-space:nowrap;transform:scaleX(0.8513);transform-origin:0 0;">REFRESH</div>
<div style="position:absolute;left:1818px;top:590px;width:73px;height:30px;background:#d3dbe4;"></div>
<div id="t54" style="position:absolute;left:1834px;top:598.39px;font-size:17.5px;line-height:17.5px;color:#bcc6d2;font-weight:400;white-space:nowrap;transform:scaleX(0.8638);transform-origin:0 0;">SAVE</div>
<svg style="position:absolute;left:350px;top:660px;" width="12" height="16" viewBox="0 0 12 16"><path d="M9.5 2 L3 8 L9.5 14 Z" fill="#7b8ea6"/></svg>
<div style="position:absolute;left:372px;top:653px;width:1px;height:25px;background:#c9cfd7;"></div>
<div id="t55" style="position:absolute;left:383px;top:657.50px;font-size:15px;line-height:15px;color:#7d8ea3;font-weight:400;white-space:nowrap;transform:scaleX(0.9137);transform-origin:0 0;">PROPERTIES</div>
<div id="t56" style="position:absolute;left:493.2px;top:657.50px;font-size:15px;line-height:15px;color:#7d8ea3;font-weight:400;white-space:nowrap;transform:scaleX(0.9560);transform-origin:0 0;">POSITIONS AND PRICES</div>
<div id="t57" style="position:absolute;left:684px;top:657.50px;font-size:15px;line-height:15px;color:#7d8ea3;font-weight:400;white-space:nowrap;transform:scaleX(0.9713);transform-origin:0 0;">PAYMENT AND DELIVERY</div>
<div id="t58" style="position:absolute;left:883px;top:657.50px;font-size:15px;line-height:15px;color:#7d8ea3;font-weight:400;white-space:nowrap;transform:scaleX(0.9886);transform-origin:0 0;">OUTPUT DOCUMENTS</div>
<div id="t59" style="position:absolute;left:1064.7px;top:657.50px;font-size:15px;line-height:15px;color:#7d8ea3;font-weight:400;white-space:nowrap;transform:scaleX(0.9521);transform-origin:0 0;">VOUCHERS</div>
<div id="t60" style="position:absolute;left:1167px;top:657.50px;font-size:15px;line-height:15px;color:#7d8ea3;font-weight:400;white-space:nowrap;transform:scaleX(0.9900);transform-origin:0 0;">PROMOTIONS</div>
<div id="t61" style="position:absolute;left:1290px;top:657.50px;font-size:15px;line-height:15px;color:#7d8ea3;font-weight:400;white-space:nowrap;transform:scaleX(0.9594);transform-origin:0 0;">TRANSACTION</div>
<div id="t62" style="position:absolute;left:1416.2px;top:657.50px;font-size:15px;line-height:15px;color:#0a84e0;font-weight:400;white-space:nowrap;transform:scaleX(0.9739);transform-origin:0 0;">REFUND</div>
<div id="t63" style="position:absolute;left:1499px;top:657.50px;font-size:15px;line-height:15px;color:#7d8ea3;font-weight:400;white-space:nowrap;transform:scaleX(0.9140);transform-origin:0 0;">TICKETS</div>
<div id="t64" style="position:absolute;left:1578.6px;top:657.50px;font-size:15px;line-height:15px;color:#7d8ea3;font-weight:400;white-space:nowrap;transform:scaleX(0.9459);transform-origin:0 0;">ORDER HISTORY</div>
<div id="t65" style="position:absolute;left:1717.7px;top:657.50px;font-size:15px;line-height:15px;color:#7d8ea3;font-weight:400;white-space:nowrap;transform:scaleX(0.9768);transform-origin:0 0;">CONSIGNMENTS</div>
<div style="position:absolute;left:1850px;top:650px;width:41px;height:35px;overflow:hidden;">
<div id="t66" style="position:absolute;left:10px;top:8.00px;font-size:15px;line-height:15px;color:#7d8ea3;font-weight:400;white-space:nowrap;">RELATIONS</div>
</div>
<div style="position:absolute;left:1891px;top:653px;width:1px;height:25px;background:#c9cfd7;"></div>
<svg style="position:absolute;left:1901px;top:660px;" width="12" height="16" viewBox="0 0 12 16"><path d="M3 2 L9.5 8 L3 14 Z" fill="#7b8ea6"/></svg>
<div style="position:absolute;left:1416px;top:683px;width:62px;height:2px;background:#0a84e0;"></div>
<div style="position:absolute;left:340px;top:685px;width:1567px;height:284px;background:#ffffff;"></div>
<div style="position:absolute;left:1907px;top:685px;width:17px;height:284px;background:#f1f1f1;"></div>
<div style="position:absolute;left:1909px;top:807px;width:13px;height:145px;background:#c1c1c1;"></div>
<svg style="position:absolute;left:1908px;top:689px;" width="14" height="9" viewBox="0 0 14 9"><path d="M3 7 L7 3 L11 7 Z" fill="#333333"/></svg>
<svg style="position:absolute;left:1908px;top:956px;" width="14" height="9" viewBox="0 0 14 9"><path d="M3 2 L7 6 L11 2 Z" fill="#a3a3a3"/></svg>
<div id="t67" style="position:absolute;left:373.4px;top:688.06px;font-size:18px;line-height:18px;color:#1c2128;font-weight:400;white-space:nowrap;letter-spacing:0.148px;">COMMON</div>
<svg style="position:absolute;left:1853px;top:689px;" width="14" height="16" viewBox="0 0 14 16"><path d="M2 8 L7 3.5 L12 8 M2 13.5 L7 9 L12 13.5" fill="none" stroke="#7b8ea6" stroke-width="2.2"/></svg>
<div id="t68" style="position:absolute;left:373.3px;top:739.30px;font-size:15px;line-height:15px;color:#7c8088;font-weight:400;white-space:nowrap;letter-spacing:0.504px;">Refunds</div>
<svg style="position:absolute;left:436px;top:738px;" width="16" height="16" viewBox="0 0 16 16"><circle cx="8" cy="8" r="7" fill="#a9b1bc"/><text x="8" y="12.2" text-anchor="middle" font-family="Liberation Sans" font-weight="700" font-size="11" fill="#fff">?</text></svg>
<div style="position:absolute;left:373px;top:767px;width:720px;height:88px;background:#ffffff;box-sizing:border-box;border:1px solid #a9a9a9;"></div>
<div style="position:absolute;left:373px;top:810px;width:720px;height:1px;background:#a9a9a9;"></div>
<div id="t69" style="position:absolute;left:385.3px;top:781.30px;font-size:15px;line-height:15px;color:#2b3038;font-weight:400;white-space:nowrap;letter-spacing:0.493px;">00000004</div>
<div id="t70" style="position:absolute;left:385.3px;top:824.10px;font-size:15px;line-height:15px;color:#2b3038;font-weight:400;white-space:nowrap;letter-spacing:0.493px;">00000003</div>
<div style="position:absolute;left:373px;top:861px;width:720px;height:44px;background:#ffffff;box-sizing:border-box;border:1px solid #a9a9a9;box-shadow:inset 2px 3px 4px rgba(0,0,0,0.07);"></div>
<div style="position:absolute;left:1049px;top:862px;width:42px;height:42px;background:#ffffff;border-left:1px solid #a9a9a9;"></div>
<svg style="position:absolute;left:1062px;top:879.5px;" width="18" height="8" viewBox="0 0 18 8"><rect x="1.5" y="1.5" width="4" height="4" fill="#5a6f8c"/><rect x="7" y="1.5" width="4" height="4" fill="#5a6f8c"/><rect x="12.5" y="1.5" width="4" height="4" fill="#5a6f8c"/></svg>
</body></html>
